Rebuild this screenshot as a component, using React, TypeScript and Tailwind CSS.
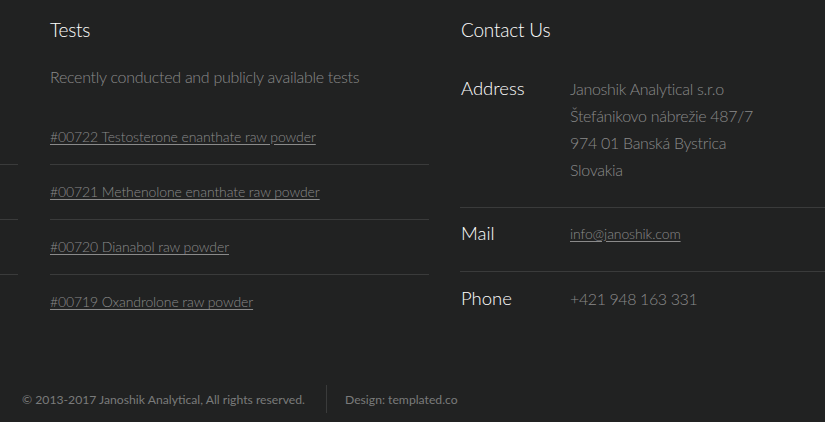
import React from "react";

const tests = [
  "#00722 Testosterone enanthate raw powder",
  "#00721 Methenolone enanthate raw powder",
  "#00720 Dianabol raw powder",
  "#00719 Oxandrolone raw powder",
];

export default function App() {
  return (
    <div className="w-[825px] h-[422px] overflow-hidden bg-[#212222] font-['Lato',sans-serif] font-light">
      <div className="flex">
        {/* sliver of previous column */}
        <div className="w-[18px] shrink-0 pt-[164px]">
          <div className="h-[55px] border-t border-[#3a3b3b]" />
          <div className="h-[55px] border-t border-[#3a3b3b]" />
          <div className="h-[55px] border-t border-[#3a3b3b]" />
        </div>

        {/* Tests */}
        <div className="ml-[32px] w-[379px] shrink-0 pt-[18px]">
          <h3 className="text-[19px] leading-[24px] tracking-[-0.2px] text-white">Tests</h3>
          <p className="mt-[23px] text-[16px] leading-[24px] tracking-[-0.28px] text-[#8a8a8a]">
            Recently conducted and publicly available tests
          </p>
          <ul className="mt-[20px]">
            {tests.map((t, i) => (
              <li
                key={t}
                className={
                  "flex h-[55px] items-center " +
                  (i > 0 ? "border-t border-[#3a3b3b]" : "")
                }
              >
                <a href="#" className="text-[14px] leading-[20px] tracking-[-0.1px] text-[#8a8a8a] underline underline-offset-2">
                  {t}
                </a>
              </li>
            ))}
          </ul>
        </div>

        {/* Contact */}
        <div className="ml-[31px] flex-1 pt-[18px]">
          <h3 className="pl-[1px] text-[19px] leading-[24px] tracking-[-0.2px] text-white">Contact Us</h3>
          <div className="mt-[33px]">
            <div className="flex pb-[24px]">
              <div className="w-[110px] shrink-0 pl-[1px] text-[18.5px] leading-[27px] text-white">Address</div>
              <div className="text-[16px] leading-[27px] tracking-[-0.3px] text-[#8a8a8a]">
                <div>Janoshik Analytical s.r.o</div>
                <div>Štefánikovo nábrežie 487/7</div>
                <div>974 01 Banská Bystrica</div>
                <div>Slovakia</div>
              </div>
            </div>
            <div className="flex border-t border-[#3a3b3b] pt-[12px] pb-[24px]">
              <div className="w-[110px] shrink-0 pl-[1px] text-[18.5px] leading-[27px] text-white">Mail</div>
              <a href="#" className="text-[14px] leading-[27px] tracking-[-0.1px] text-[#8a8a8a] underline underline-offset-2">
                info@janoshik.com
              </a>
            </div>
            <div className="flex border-t border-[#3a3b3b] pt-[13px] pb-[23px]">
              <div className="w-[110px] shrink-0 pl-[1px] text-[18.5px] leading-[27px] text-white">Phone</div>
              <div className="text-[16px] leading-[27px] tracking-[-0.4px] text-[#8a8a8a]">+421 948 163 331</div>
            </div>
          </div>
        </div>
      </div>

      {/* footer */}
      <div className="mt-[50px] flex items-center pl-[22px] text-[12.2px] font-normal text-[#7a7b7b]">
        <span className="pt-[3px] pr-[21px]">© 2013-2017 Janoshik Analytical, All rights reserved.</span>
        <span className="h-[28px] border-l border-[#3a3b3b]" />
        <span className="pt-[3px] pl-[18px]">Design: templated.co</span>
      </div>
    </div>
  );
}
